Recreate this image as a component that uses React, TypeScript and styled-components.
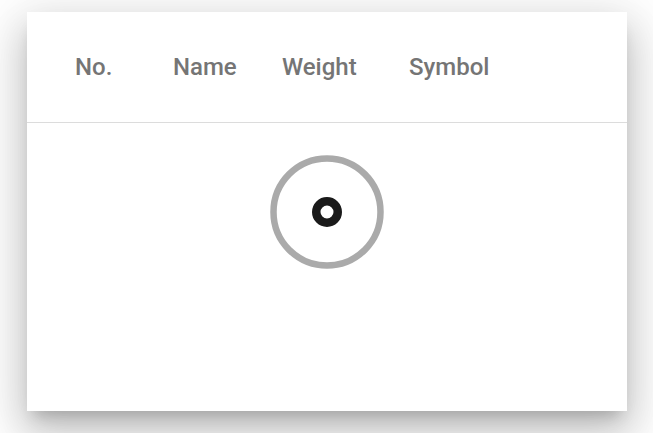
import React from "react";
import styled, { createGlobalStyle } from "styled-components";

const GlobalStyle = createGlobalStyle`
  html, body {
    margin: 0;
    padding: 0;
    background: #ffffff;
    font-family: Roboto, "Noto Sans", sans-serif;
  }
`;

const Page = styled.div`
  box-sizing: border-box;
  min-height: 100vh;
  padding: 12px 0 22px 27px;
`;

const Card = styled.section`
  width: 600px;
  height: 399px;
  background: #ffffff;
  display: flex;
  flex-direction: column;
  box-shadow: 0 11px 15px -7px rgba(0, 0, 0, 0.2),
    0 24px 38px 3px rgba(0, 0, 0, 0.14), 0 9px 46px 8px rgba(0, 0, 0, 0.12);
`;

const HeaderRow = styled.div`
  height: 111px;
  box-sizing: border-box;
  padding-left: 48px;
  display: grid;
  grid-template-columns: 98px 109px 127px 1fr;
  align-items: center;
  border-bottom: 1px solid #dcdcdc;
`;

const HeaderCell = styled.div`
  font-family: Roboto, sans-serif;
  font-weight: 500;
  font-size: 24px;
  color: #757575;
  white-space: nowrap;
`;

const Body = styled.div`
  flex: 1;
  display: flex;
  justify-content: center;
  align-items: flex-start;
  padding-top: 32px;
`;

const Spinner = () => (
  <svg width="114" height="114" viewBox="0 0 114 114">
    <circle cx="57" cy="57" r="53.5" fill="none" stroke="#aaaaaa" strokeWidth="6.5" />
    <circle cx="57" cy="57" r="10.75" fill="none" stroke="#1a1a1a" strokeWidth="8.5" />
  </svg>
);

const columns = ["No.", "Name", "Weight", "Symbol"];

export default function App() {
  return (
    <>
      <GlobalStyle />
      <Page>
        <Card>
          <HeaderRow>
            {columns.map((c) => (
              <HeaderCell key={c}>{c}</HeaderCell>
            ))}
          </HeaderRow>
          <Body>
            <Spinner />
          </Body>
        </Card>
      </Page>
    </>
  );
}
